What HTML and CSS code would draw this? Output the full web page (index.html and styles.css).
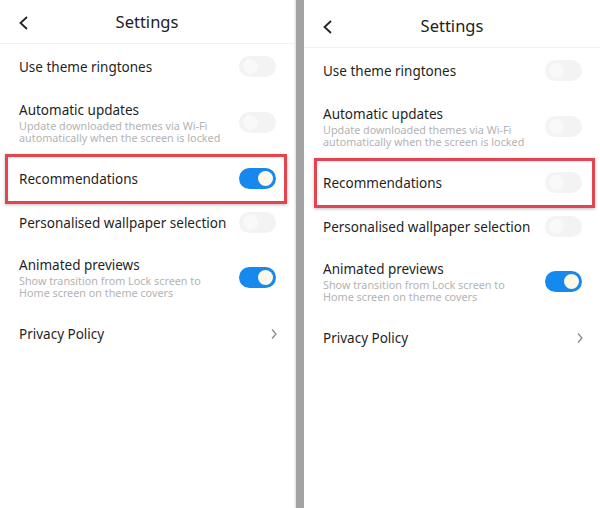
FILE: index.html
```html
<!DOCTYPE html>
<html lang="en">
<head>
    <meta charset="UTF-8">
    <meta name="viewport" content="width=device-width, initial-scale=1.0">
    <title>Theme Settings - Before and After</title>
    <link rel="stylesheet" href="styles.css">
</head>
<body>
    <div class="compare">
        <!-- Before: recommendations on -->
        <section class="phone">
            <header class="top-bar">
                <svg class="back" width="12" height="14" viewBox="0 0 12 14"><path d="M9 1 L2.5 7 L9 13" fill="none" stroke="#222" stroke-width="1.8"/></svg>
                <h1 class="title">Settings</h1>
            </header>
            <ul class="list">
                <li class="row">
                    <div class="label"><span class="name">Use theme ringtones</span></div>
                    <span class="switch"></span>
                </li>
                <li class="row double">
                    <div class="label">
                        <span class="name">Automatic updates</span>
                        <span class="hint">Update downloaded themes via Wi-Fi automatically when the screen is locked</span>
                    </div>
                    <span class="switch"></span>
                </li>
                <li class="row highlight">
                    <div class="label"><span class="name">Recommendations</span></div>
                    <span class="switch on"></span>
                </li>
                <li class="row short">
                    <div class="label"><span class="name">Personalised wallpaper selection</span></div>
                    <span class="switch"></span>
                </li>
                <li class="row double">
                    <div class="label">
                        <span class="name">Animated previews</span>
                        <span class="hint">Show transition from Lock screen to Home screen on theme covers</span>
                    </div>
                    <span class="switch on"></span>
                </li>
                <li class="row">
                    <div class="label"><span class="name">Privacy Policy</span></div>
                    <svg class="more" width="8" height="12" viewBox="0 0 8 12"><path d="M2 1.5 L6 6 L2 10.5" fill="none" stroke="#8a8a8a" stroke-width="1.3"/></svg>
                </li>
            </ul>
        </section>

        <div class="divider"></div>

        <!-- After: recommendations off -->
        <section class="phone shifted">
            <header class="top-bar">
                <svg class="back" width="12" height="14" viewBox="0 0 12 14"><path d="M9 1 L2.5 7 L9 13" fill="none" stroke="#222" stroke-width="1.8"/></svg>
                <h1 class="title">Settings</h1>
            </header>
            <ul class="list">
                <li class="row">
                    <div class="label"><span class="name">Use theme ringtones</span></div>
                    <span class="switch"></span>
                </li>
                <li class="row double">
                    <div class="label">
                        <span class="name">Automatic updates</span>
                        <span class="hint">Update downloaded themes via Wi-Fi automatically when the screen is locked</span>
                    </div>
                    <span class="switch"></span>
                </li>
                <li class="row highlight">
                    <div class="label"><span class="name">Recommendations</span></div>
                    <span class="switch"></span>
                </li>
                <li class="row short">
                    <div class="label"><span class="name">Personalised wallpaper selection</span></div>
                    <span class="switch"></span>
                </li>
                <li class="row double">
                    <div class="label">
                        <span class="name">Animated previews</span>
                        <span class="hint">Show transition from Lock screen to Home screen on theme covers</span>
                    </div>
                    <span class="switch on"></span>
                </li>
                <li class="row">
                    <div class="label"><span class="name">Privacy Policy</span></div>
                    <svg class="more" width="8" height="12" viewBox="0 0 8 12"><path d="M2 1.5 L6 6 L2 10.5" fill="none" stroke="#8a8a8a" stroke-width="1.3"/></svg>
                </li>
            </ul>
        </section>
    </div>
</body>
</html>
```

FILE: styles.css
```css
/* Reset and Base Styles */
* {
    margin: 0;
    padding: 0;
    box-sizing: border-box;
}

body {
    font-family: 'Noto Sans', 'Open Sans', sans-serif;
    background-color: #ffffff;
    color: #1f1f1f;
    width: 600px;
    height: 508px;
    overflow: hidden;
}

.compare {
    display: flex;
    height: 508px;
}

/* Phone panels */
.phone {
    width: 295px;
    height: 100%;
    background-color: #ffffff;
    border-right: 1px solid #f0f0f0;
}

.phone.shifted {
    width: 296px;
    padding-top: 4px;
    border-right: none;
}

.divider {
    width: 9px;
    background-color: #a3a3a3;
    border-left: 1px solid #e8e8e8;
}

/* Header */
.top-bar {
    position: relative;
    height: 44px;
    display: flex;
    align-items: center;
    justify-content: center;
    border-bottom: 1px solid #f1f1f1;
}

.back {
    position: absolute;
    left: 18px;
    top: 16px;
}

.title {
    font-size: 16.5px;
    font-weight: 400;
    color: #222;
    margin-top: -1px;
}

/* Rows */
.list {
    list-style: none;
}

.row {
    position: relative;
    display: flex;
    align-items: center;
    justify-content: space-between;
    min-height: 45px;
    padding: 0 19px;
}

.row.short {
    min-height: 43px;
}

.row.double {
    min-height: 67px;
}

.label {
    display: flex;
    flex-direction: column;
}

.name {
    font-size: 13.5px;
    line-height: 18px;
    color: #1f1f1f;
}

.hint {
    font-size: 10.8px;
    line-height: 12.5px;
    color: #b3b3b3;
    max-width: 215px;
    margin-top: 1px;
}

.highlight::after {
    content: '';
    position: absolute;
    top: -2px;
    bottom: -3px;
    left: 5px;
    right: 7px;
    border: 3px solid #e2454e;
    box-shadow: 0 1px 3px rgba(0, 0, 0, 0.25), inset 0 1px 2px rgba(0, 0, 0, 0.08);
}

.phone.shifted .highlight::after {
    left: 10px;
    right: 5px;
}

/* Switches */
.switch {
    position: relative;
    flex-shrink: 0;
    width: 37px;
    height: 21px;
    border-radius: 11px;
    background-color: #f3f3f3;
    margin-right: -1px;
}

.switch::after {
    content: '';
    position: absolute;
    top: 3px;
    left: 4px;
    width: 15px;
    height: 15px;
    border-radius: 50%;
    background-color: #f9f9f9;
}

.switch.on {
    background-color: #1689ee;
}

.switch.on::after {
    left: auto;
    right: 3px;
    background-color: #fdf8ec;
}

.more {
    margin-right: -3px;
}
```
